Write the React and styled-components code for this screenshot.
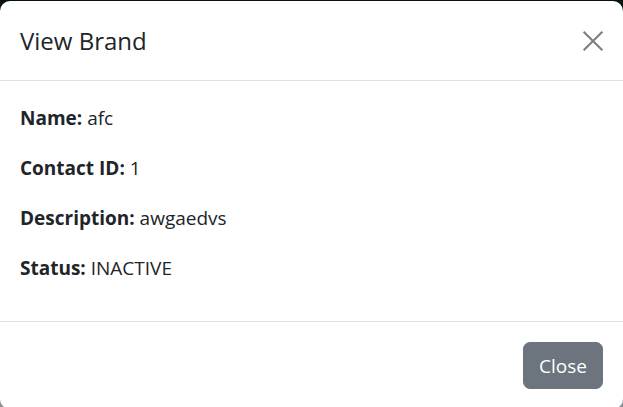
import styled, { createGlobalStyle } from "styled-components";

const GlobalStyle = createGlobalStyle`
  html, body {
    margin: 0;
    padding: 0;
    overflow: hidden;
  }
  body {
    background: linear-gradient(#06130d 0 60%, #8c9196 60%);
    font-family: "Segoe UI", "Open Sans", "Noto Sans", sans-serif;
    color: #212529;
  }
`;

const details = [
  { label: "Name:", value: "afc" },
  { label: "Contact ID:", value: "1" },
  { label: "Description:", value: "awgaedvs" },
  { label: "Status:", value: "INACTIVE" },
];

export default function App() {
  return (
    <>
      <GlobalStyle />
      <ModalContent>
        <ModalHeader>
          <ModalTitle>View Brand</ModalTitle>
          <CloseIcon aria-label="Close">
            <svg width="22" height="22" viewBox="0 0 16 16">
              <path
                d="M1.2 1.2l13.6 13.6M14.8 1.2l-13.6 13.6"
                stroke="currentColor"
                strokeWidth="1.5"
              />
            </svg>
          </CloseIcon>
        </ModalHeader>
        <ModalBody>
          {details.map((d) => (
            <DetailRow key={d.label}>
              <strong>{d.label}</strong> {d.value}
            </DetailRow>
          ))}
        </ModalBody>
        <ModalFooter>
          <SecondaryButton>Close</SecondaryButton>
        </ModalFooter>
      </ModalContent>
    </>
  );
}

const ModalContent = styled.div`
  margin-top: 1px;
  width: 623px;
  background: #fff;
  border-radius: 10px;
  overflow: hidden;
`;

const ModalHeader = styled.div`
  display: flex;
  align-items: center;
  justify-content: space-between;
  padding: 21px 20px 20px;
  border-bottom: 1px solid #dee2e6;
`;

const ModalTitle = styled.h5`
  margin: 0;
  font-size: 24px;
  font-weight: 500;
  line-height: 38px;
`;

const CloseIcon = styled.button`
  display: flex;
  align-items: center;
  justify-content: center;
  width: 30px;
  height: 30px;
  margin-right: -5px;
  padding: 0;
  border: 0;
  background: transparent;
  color: #7c7e80;
  cursor: pointer;
`;

const ModalBody = styled.div`
  padding: 22px 20px 18px;
`;

const DetailRow = styled.p`
  margin: 0 0 20px;
  font-size: 19px;
  line-height: 30px;

  strong {
    font-weight: 700;
  }
`;

const ModalFooter = styled.div`
  display: flex;
  justify-content: flex-end;
  padding: 15px;
  border-top: 1px solid #dee2e6;
`;

const SecondaryButton = styled.button`
  margin: 5px;
  padding: 7px 15px;
  width: 80px;
  height: 47px;
  font-family: inherit;
  font-size: 19px;
  line-height: 30px;
  color: #fff;
  background: #6c757d;
  border: 1px solid #6c757d;
  border-radius: 7px;
  cursor: pointer;
`;
